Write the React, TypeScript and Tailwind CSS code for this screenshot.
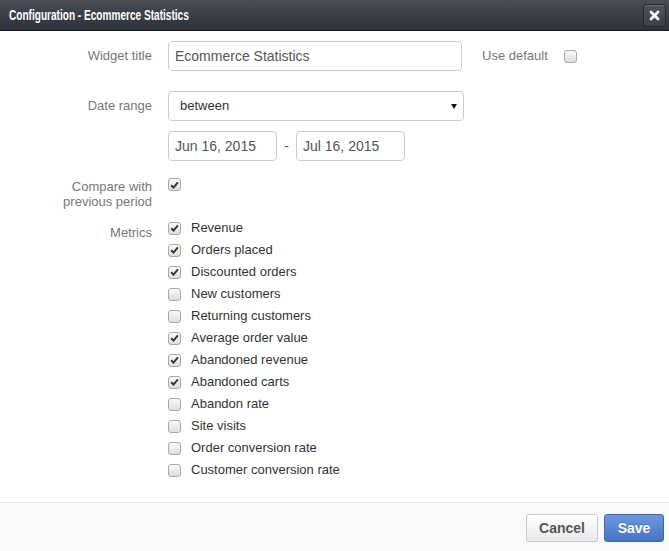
import React from "react";

const Box = ({ checked }: { checked: boolean }) => (
  <span className="w-[13px] h-[13px] rounded-[3px] border border-[#a8a8a8] bg-linear-to-b from-[#fafafa] to-[#dedede] flex items-center justify-center shrink-0">
    {checked && (
      <svg width="9" height="8" viewBox="0 0 9 8">
        <path d="M1.2 4.3 L3.5 6.5 L7.9 1.3" stroke="#333" strokeWidth="1.9" fill="none" strokeLinejoin="miter" />
      </svg>
    )}
  </span>
);

const metrics: [string, boolean][] = [
  ["Revenue", true],
  ["Orders placed", true],
  ["Discounted orders", true],
  ["New customers", false],
  ["Returning customers", false],
  ["Average order value", true],
  ["Abandoned revenue", true],
  ["Abandoned carts", true],
  ["Abandon rate", false],
  ["Site visits", false],
  ["Order conversion rate", false],
  ["Customer conversion rate", false],
];

export default function App() {
  return (
    <div className="w-[669px] h-[551px] bg-white flex flex-col overflow-hidden" style={{ fontFamily: '"Liberation Sans", Arial, sans-serif' }}>
      <div className="h-[31px] shrink-0 bg-linear-to-b from-[#484d56] to-[#2e3239] border-b border-[#1b1d21] flex items-center justify-between pl-[9px] pr-[3px]">
        <div className="text-white font-bold text-[14px] leading-none whitespace-nowrap scale-x-[0.72] origin-left">
          Configuration - Ecommerce Statistics
        </div>
        <div className="w-[23px] h-[23px] rounded-[3px] border border-[#25282d] bg-linear-to-b from-[#4f545d] to-[#3b3f47] flex items-center justify-center shadow-[inset_0_1px_0_rgba(255,255,255,0.12)]">
          <svg width="11" height="11" viewBox="0 0 11 11">
            <path d="M2 2 L9 9 M9 2 L2 9" stroke="#fff" strokeWidth="2.8" strokeLinecap="round" />
          </svg>
        </div>
      </div>

      <div className="flex-1 flex flex-col pt-[10px]">
        {/* Widget title */}
        <div className="flex items-center h-[30px]">
          <div className="w-[152px] text-right text-[13px] text-[#777]">Widget title</div>
          <div className="ml-[16px] w-[294px] h-[30px] border border-[#ccc] rounded-[4px] flex items-center pl-[6px] text-[14px] text-[#555]">
            Ecommerce Statistics
          </div>
          <div className="ml-[20px] text-[13px] text-[#777]">Use default</div>
          <div className="ml-[16px]"><Box checked={false} /></div>
        </div>

        {/* Date range */}
        <div className="flex items-center h-[30px] mt-[20px]">
          <div className="w-[152px] text-right text-[13px] text-[#777]">Date range</div>
          <div className="ml-[16px] w-[296px] h-[30px] border border-[#ccc] rounded-[4px] flex items-center justify-between pl-[11px] pr-[6px] text-[13px] text-[#333]">
            <span>between</span>
            <svg width="6" height="5" viewBox="0 0 6 5"><path d="M0 0 H6 L3 5 Z" fill="#111" /></svg>
          </div>
        </div>

        {/* Dates */}
        <div className="flex items-center h-[30px] mt-[10px] pl-[168px]">
          <div className="w-[109px] h-[30px] border border-[#ccc] rounded-[4px] flex items-center pl-[6px] text-[14px] text-[#555]">Jun 16, 2015</div>
          <div className="w-[19px] text-center text-[14px] text-[#555]">-</div>
          <div className="w-[109px] h-[30px] border border-[#ccc] rounded-[4px] flex items-center pl-[6px] text-[14px] text-[#555]">Jul 16, 2015</div>
        </div>

        {/* Compare */}
        <div className="flex items-start mt-[17px]">
          <div className="w-[152px] text-right text-[13px] leading-[15px] text-[#777] mt-[1px]">
            Compare with
            <br />
            previous period
          </div>
          <div className="ml-[16px]"><Box checked={true} /></div>
        </div>

        {/* Metrics */}
        <div className="flex items-start mt-[8px]">
          <div className="w-[152px] text-right text-[13px] leading-[15px] text-[#777] mt-[8px]">Metrics</div>
          <div className="ml-[16px] flex flex-col">
            {metrics.map(([name, c]) => (
              <div key={name} className="h-[22px] flex items-center">
                <Box checked={c} />
                <span className="ml-[10px] text-[13px] text-[#333]">{name}</span>
              </div>
            ))}
          </div>
        </div>
      </div>

      <div className="h-[49px] shrink-0 border-t border-[#e5e5e5] bg-[#f9f9f9] flex items-start justify-end pt-[11px] pr-[5px] gap-[6px]">
        <div className="w-[72px] h-[28px] rounded-[3px] border border-[#c8c8c8] bg-linear-to-b from-[#ffffff] to-[#e8e8e8] flex items-center justify-center text-[14px] font-bold text-[#555]">
          Cancel
        </div>
        <div className="w-[60px] h-[28px] rounded-[3px] border border-[#3f69ad] bg-linear-to-b from-[#6a98e0] to-[#4774c0] flex items-center justify-center text-[14px] font-bold text-white [text-shadow:0_-1px_0_rgba(0,0,0,0.2)]">
          Save
        </div>
      </div>
    </div>
  );
}
